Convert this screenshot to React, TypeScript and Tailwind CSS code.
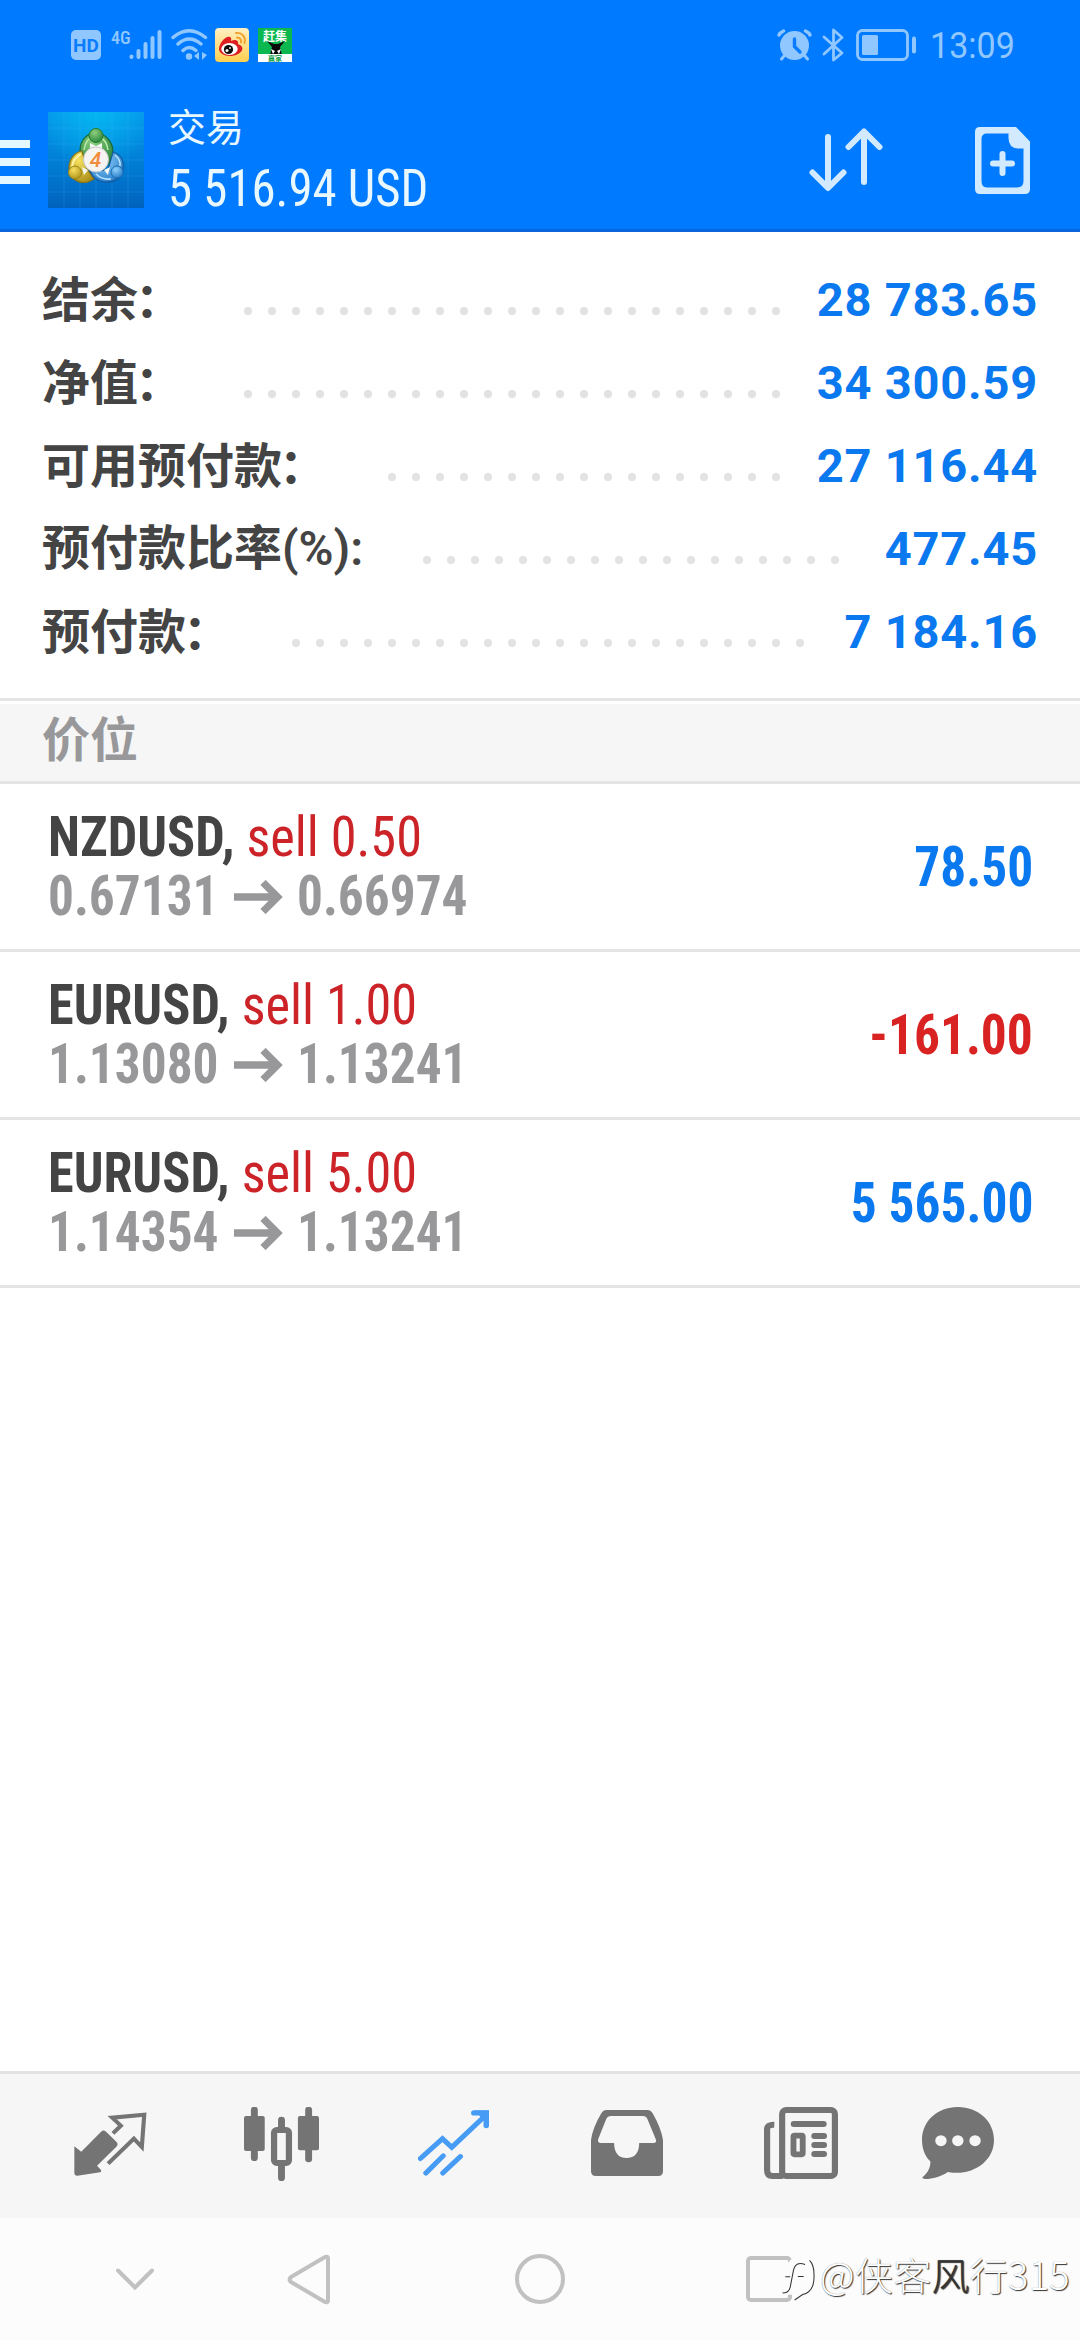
import React from 'react';

const cond = "font-['Roboto_Condensed','Roboto',sans-serif] [font-stretch:75%]";

const summary = [
  { label: '结余', latin: '', value: '28 783.65', start: 244, dots: 23 },
  { label: '净值', latin: '', value: '34 300.59', start: 244, dots: 23 },
  { label: '可用预付款', latin: '', value: '27 116.44', start: 388, dots: 17 },
  { label: '预付款比率', latin: '(%):', value: '477.45', start: 423, dots: 18 },
  { label: '预付款', latin: '', value: '7 184.16', start: 292, dots: 22 },
];

const positions = [
  { symbol: 'NZDUSD,', side: 'sell 0.50', open: '0.67131', price: '0.66974', profit: '78.50' },
  { symbol: 'EURUSD,', side: 'sell 1.00', open: '1.13080', price: '1.13241', profit: '-161.00' },
  { symbol: 'EURUSD,', side: 'sell 5.00', open: '1.14354', price: '1.13241', profit: '5 565.00' },
];

function StatusBar() {
  return (
    <div className="flex h-[90px] items-center pl-[71px] pr-[66px] text-[#91c7ff]">
      <div className="flex h-[30px] w-[30px] items-center justify-center rounded-[5px] bg-[#91c7ff] font-['Roboto'] text-[19px] font-bold leading-none text-[#0a7cff]">
        HD
      </div>
      <div className="ml-[10px] h-[32px] w-[18px] font-['Roboto_Condensed','Roboto'] text-[18px] font-medium leading-[18px] [font-stretch:75%]">
        4G
      </div>
      <svg className="h-[32px] w-[33px]" viewBox="0 0 33 32" stroke="currentColor" strokeWidth="4" strokeLinecap="round">
        <path d="M2.5 27.5v.5M9.5 22v6M16.500 15v13M23.500 9v19M30.500 3v25" />
      </svg>
      <svg className="ml-[9px] h-[32px] w-[37px]" viewBox="0 0 37 32" fill="none" stroke="currentColor" strokeWidth="3.4" strokeLinecap="round">
        <path d="M2 8.500Q18 -5 34.500 8.500M7 15Q18 5 30 15M12 21.500Q18 15.500 25 21.500" />
        <circle cx="18" cy="27.500" r="3.200" fill="currentColor" stroke="none" />
        <path d="M23 27l5-4v8M31 23v8l5-5z" fill="currentColor" stroke="none" />
      </svg>
      <svg className="ml-[7px] h-[34px] w-[34px]" viewBox="0 0 34 34">
        <defs>
          <linearGradient id="wb" x1="0" y1="0" x2="0" y2="1">
            <stop offset="0" stopColor="#fff0c4" />
            <stop offset="1" stopColor="#ffcf4e" />
          </linearGradient>
        </defs>
        <rect width="34" height="34" rx="4" fill="url(#wb)" />
        <path d="M4 21C4 15 11 7 15 9c2 1 1 3 1 4 4-2 8-1 7 3 9 3 3 12-8 12C9 28 4 25 4 21z" fill="#dd1f22" />
        <ellipse cx="14.500" cy="21" rx="8.200" ry="6" fill="#fff" />
        <circle cx="13.500" cy="21.500" r="4.600" fill="#0c0c0c" />
        <circle cx="12" cy="22.500" r="1.500" fill="#fff" />
        <circle cx="15" cy="20" r=".9" fill="#fff" />
        <path d="M21 5c6-1 10 4 8.500 10M22 9.500c3 0 4.500 2 4 5" fill="none" stroke="#f3a02a" strokeWidth="1.900" strokeLinecap="round" />
      </svg>
      <div className="relative ml-[9px] flex h-[34px] w-[34px] flex-col items-center justify-between overflow-hidden bg-[#0bb84f]">
        <span className="mt-[1px] font-['Noto_Sans_CJK_SC'] text-[12px] font-bold leading-[14px] text-white">赶集</span>
        <svg className="absolute left-[9px] top-[13px] h-[14px] w-[18px]" viewBox="0 0 18 14">
          <path d="M0 0l7 3h4l7-3-5 6 2 8H3l2-8z" fill="#0a0a0a" />
          <path d="M4 8l4 2-2 3zM14 8l-4 2 2 3z" fill="#fff" />
        </svg>
        <span className="relative h-[8px] w-full bg-white text-center font-['Noto_Sans_CJK_SC'] text-[7px] font-bold leading-[8px] text-[#0b9c45]">赢家</span>
      </div>
      <div className="flex-1" />
      <svg className="h-[32px] w-[35px]" viewBox="0 0 35 32" fill="none" stroke="currentColor" strokeLinecap="round">
        <circle cx="17.500" cy="16.500" r="14.500" fill="currentColor" stroke="none" />
        <path d="M2 6q1-2.500 4.500-4M33 6q-1-2.500-4.500-4" strokeWidth="3.400" />
        <path d="M7 27l-2.500 3M28 27l2.500 3" strokeWidth="3" />
        <path d="M17.500 10v7.500l5.500 5.500" stroke="#0a7cff" strokeWidth="3.400" />
      </svg>
      <svg className="ml-[10px] h-[34px] w-[22px]" viewBox="0 0 22 34" fill="none" stroke="currentColor" strokeWidth="2.800" strokeLinejoin="round" strokeLinecap="round">
        <path d="M2 9l18 16-8.500 7V2L20 9.500 2 26" />
      </svg>
      <svg className="ml-[12px] h-[32px] w-[60px]" viewBox="0 0 60 32" fill="none">
        <rect x="1.500" y="1.500" width="50" height="29" rx="5" stroke="currentColor" strokeWidth="2.800" />
        <rect x="6" y="6" width="16" height="20" rx="1.500" fill="currentColor" />
        <rect x="56" y="7.500" width="4" height="17" rx="2" fill="currentColor" />
      </svg>
      <span className="ml-[14px] mt-[1px] w-[84px] origin-left scale-x-[.92] whitespace-nowrap font-['Roboto'] text-[37px] leading-none [font-stretch:88%]">13:09</span>
    </div>
  );
}

function AppLogo() {
  return (
    <svg className="ml-[18px] h-[96px] w-[96px]" viewBox="0 0 96 96">
      <defs>
        <linearGradient id="bgv" x1="0" y1="0" x2="0" y2="1">
          <stop offset="0" stopColor="#0797ea" />
          <stop offset=".5" stopColor="#0080d6" />
          <stop offset="1" stopColor="#0062bd" />
        </linearGradient>
        <radialGradient id="glow" cx=".5" cy="0" r=".6">
          <stop offset="0" stopColor="#03b6f2" />
          <stop offset="1" stopColor="#03b6f2" stopOpacity="0" />
        </radialGradient>
        <radialGradient id="gr" cx=".4" cy=".3" r=".8">
          <stop offset="0" stopColor="#8fce7e" />
          <stop offset="1" stopColor="#1f7f35" />
        </radialGradient>
        <radialGradient id="ye" cx=".4" cy=".3" r=".8">
          <stop offset="0" stopColor="#f6e160" />
          <stop offset="1" stopColor="#a88a14" />
        </radialGradient>
        <radialGradient id="bl" cx=".4" cy=".3" r=".8">
          <stop offset="0" stopColor="#8fd0fb" />
          <stop offset="1" stopColor="#1c74c4" />
        </radialGradient>
      </defs>
      <rect width="96" height="96" fill="url(#bgv)" />
      <rect width="96" height="96" fill="url(#glow)" />
      <path d="M16 0v96M32 0v96M48 0v96M64 0v96M80 0v96M0 16h96M0 32h96M0 48h96M0 64h96M0 80h96" stroke="#5ec0f5" strokeOpacity=".22" strokeWidth=".8" />
      <path d="M32 39C32 28 39 21 48 21s17 9 17 19c0 8-3 11-6 13L48 36 37 46z" fill="url(#gr)" stroke="#176a35" strokeWidth="1.200" />
      <path d="M36 38q2-12 9-13M60 38q-1-9-8-13" fill="none" stroke="#b9ecac" strokeWidth="1.500" />
      <path d="M34 39c-8 1-13 9-13 17 0 11 10 16 19 14l6-3-7-10z" fill="url(#ye)" stroke="#8a7416" strokeWidth="1.200" />
      <path d="M33 42q-8 4-9 13" fill="none" stroke="#fff3a2" strokeWidth="2" />
      <path d="M65 40c9 3 11 10 10 17-1 10-10 14-19 13-8-1-12-6-14-11l18-1z" fill="url(#bl)" stroke="#15599d" strokeWidth="1.200" />
      <path d="M48 62q6 6 15 5M67 43q6 5 5 11" fill="none" stroke="#b8e4ff" strokeWidth="1.600" />
      <path d="M42 31l6 3 6-3v5H42zM34 55l6 3-4 5zM62 55l-6 3 4 5z" fill="#f2f7f2" />
      <circle cx="48" cy="23.500" r="7" fill="url(#gr)" stroke="#267c31" />
      <circle cx="27" cy="60.500" r="6.500" fill="url(#ye)" stroke="#9c8518" />
      <circle cx="69" cy="60" r="6" fill="url(#bl)" stroke="#206db1" />
      <circle cx="48" cy="47.500" r="12.500" fill="#f6f4f2" stroke="#c9c9c9" />
      <text x="47.500" y="55" textAnchor="middle" fontFamily="Roboto" fontSize="21" fontWeight="500" fontStyle="italic" fill="#f08c3c">4</text>
    </svg>
  );
}

function Header() {
  return (
    <header className="h-[232px] border-b-[3px] border-[#0865dc] bg-[#007aff]">
      <StatusBar />
      <div className="flex pt-[22px]">
        <div className="mt-[28px] flex h-[44px] w-[30px] flex-col justify-between">
          <div className="h-[8px] bg-[#e6f8ff]" />
          <div className="h-[8px] bg-[#e6f8ff]" />
          <div className="h-[8px] bg-[#e6f8ff]" />
        </div>
        <AppLogo />
        <div className="-mt-[9px] ml-[24px] flex w-[300px] flex-col text-[#e9f8ff]">
          <span className="font-['Noto_Sans_CJK_SC'] text-[38px] leading-[44px]">交易</span>
          <span className={`mt-[12px] origin-left scale-x-[.957] whitespace-nowrap text-[51px] leading-[60px] ${cond}`}>5 516.94 USD</span>
        </div>
        <svg className="ml-[341px] mt-[16px] h-[64px] w-[75px]" viewBox="0 0 75 64" fill="none" stroke="#d2eaff" strokeWidth="6" strokeLinecap="round" strokeLinejoin="round">
          <path d="M19 9v50M3.500 44.500L19 60l15.500-15.500M55 54V4M39.500 19L55 3.500 70.500 19" />
        </svg>
        <svg className="ml-[91px] mt-[15px] h-[67px] w-[55px]" viewBox="0 0 55 67">
          <path fillRule="evenodd" d="M5 0H41L55 14.500V62Q55 67 50 67H5Q0 67 0 62V5Q0 0 5 0ZM12 6.500Q6.500 6.500 6.500 12V54Q6.500 60.500 12 60.500H42Q48.500 60.500 48.500 54V21.500H44Q33.500 21.500 33.500 11V6.500Z" fill="#d2eaff" />
          <path d="M18 36.500h19M27.500 27v19" stroke="#d2eaff" strokeWidth="6" strokeLinecap="round" />
        </svg>
      </div>
    </header>
  );
}

function Summary() {
  return (
    <section className="flex h-[466px] flex-col bg-white pt-[26px]">
      {summary.map((row) => (
        <div key={row.label} className="relative flex h-[83px] items-center justify-between pl-[42px] pr-[42px]">
          {row.latin ? (
            <span className="mb-[4px] whitespace-nowrap font-['Noto_Sans_CJK_SC'] text-[48px] font-bold leading-none text-[#444]">
              {row.label}
              <span className="font-['Roboto'] text-[47.500px] font-semibold">{row.latin}</span>
            </span>
          ) : (
            <span className="mb-[7px] whitespace-nowrap font-['Noto_Sans_CJK_SC'] text-[48px] font-bold leading-none text-[#444]">
              {row.label.slice(0, -1)}
              <span className="tracking-[-3px]">{row.label.slice(-1)}</span>：
            </span>
          )}
          <div className="absolute top-[49px] flex gap-4" style={{ left: row.start }}>
            {Array.from({ length: row.dots }, (_, i) => (
              <i key={i} className="h-2 w-2 rounded-full bg-[#e2e2e2]" />
            ))}
          </div>
          <span className="whitespace-nowrap font-['Roboto'] text-[47px] font-bold leading-none tracking-[0.8px] text-[#0a78ee]">{row.value}</span>
        </div>
      ))}
    </section>
  );
}

function Position({ p }: { p: (typeof positions)[number] }) {
  return (
    <div className="flex h-[168px] items-center justify-between border-b-[3px] border-[#e4e4e4] bg-white pl-[48px] pr-[47px]">
      <div className={`whitespace-nowrap text-[55px] leading-[59px] ${cond}`}>
        <div className="origin-left scale-x-[.95] font-bold text-[#444]">
          {p.symbol} <span className="font-normal text-[#cc2328]">{p.side}</span>
        </div>
        <div className="flex items-center font-bold text-[#98989b]">
          <span className="w-[186px] origin-left scale-x-[.933]">{p.open}</span>
          <svg className="mt-[2px] h-[34px] w-[49px]" viewBox="0 0 49 34" fill="none" stroke="currentColor" strokeWidth="7.400">
            <path d="M0 17h43M29 2.500L43.500 17 29 31.500" />
          </svg>
          <span className="ml-[14px] origin-left scale-x-[.933]">{p.price}</span>
        </div>
      </div>
      <span className={`mt-[2px] origin-right scale-x-[.935] whitespace-nowrap text-[55px] font-bold ${cond} ${p.profit.startsWith('-') ? 'text-[#d92323]' : 'text-[#0a78ee]'}`}>{p.profit}</span>
    </div>
  );
}

function TabBar() {
  return (
    <nav className="flex h-[147px] border-t-[3px] border-[#e3e3e3] bg-[#f6f6f6] text-[#747474]">
      <svg className="ml-[74px] mt-[38px] h-[64px] w-[73px]" viewBox="214 157 212 192" preserveAspectRatio="none">
        <path d="M215 260L235 276L292 217Q299 209 307 216L337 246Q344 254 337 261L281 318L293 332Q294 336 290 338L224 348Q215 349 215 341Z" fill="currentColor" />
        <path d="M327 221L350 198L325 174L418 165L411 262L388 237L313 312" fill="none" stroke="currentColor" strokeWidth="12" />
      </svg>
      <svg className="ml-[97px] mt-[33px] h-[74px] w-[75px]" viewBox="709 141 217 222" preserveAspectRatio="none">
        <path d="M739 150v143M896 150v147M817.500 180v25M817.500 315v38" stroke="currentColor" strokeWidth="20" strokeLinecap="round" />
        <rect x="709" y="168" width="60" height="105" rx="6" fill="currentColor" />
        <rect x="865" y="168" width="61" height="103" rx="6" fill="currentColor" />
        <rect x="796" y="210" width="43" height="99" rx="8" fill="none" stroke="currentColor" strokeWidth="18" />
      </svg>
      <svg className="ml-[99px] mt-[36px] h-[66px] w-[71px]" viewBox="1214 149 206 200" preserveAspectRatio="none" fill="none" stroke="#469bf5" strokeWidth="15" strokeLinecap="round">
        <path d="M1221 296L1285 236L1312 262L1405 170" />
        <path d="M1376 158H1412V196" strokeWidth="16" />
        <path d="M1395 158h17v20z" fill="#469bf5" />
        <path d="M1237 340L1287 288M1286 340L1337 290" />
      </svg>
      <svg className="ml-[102px] mt-[36px] h-[66px] w-[72px]" viewBox="147 150 209 198" preserveAspectRatio="none">
        <path fillRule="evenodd" fill="currentColor" d="M192 150H312Q320 150 326 160Q350 203 356 240V334Q356 348 342 348H161Q147 348 147 334V240Q152 203 177 160Q183 150 192 150ZM205 168Q195 168 191 178L168 237Q165 249 176 249H214Q215 294 250 294Q286 294 287 249H328Q339 249 335 238L311 178Q307 168 298 168Z" />
      </svg>
      <svg className="ml-[101px] mt-[33px] h-[72px] w-[74px]" viewBox="647 141 216 216" preserveAspectRatio="none">
        <rect x="700" y="150" width="154" height="198" rx="12" fill="none" stroke="currentColor" strokeWidth="18" />
        <path d="M677 194Q656 193 656 208V330Q656 348 672 348H702" fill="none" stroke="currentColor" strokeWidth="18" />
        <path d="M734 192h87M794 228h28M794 255h28M794 282h28" stroke="currentColor" strokeWidth="18" strokeLinecap="round" />
        <rect x="733" y="227" width="27" height="56" rx="3" fill="none" stroke="currentColor" strokeWidth="17" />
      </svg>
      <svg className="ml-[84px] mt-[33px] h-[72px] w-[72px]" viewBox="1109 141 209 216" preserveAspectRatio="none">
        <path d="M1213 141C1273 141 1318 184 1318 240C1318 306 1253 350 1184 336C1164 350 1140 357 1118 357Q1106 356 1112 350C1124 341 1135 322 1133 304C1117 288 1109 265 1109 240C1109 184 1153 141 1213 141Z" fill="currentColor" />
        <circle cx="1164" cy="242" r="16.500" fill="#f6f6f6" />
        <circle cx="1213" cy="242" r="16.500" fill="#f6f6f6" />
        <circle cx="1263" cy="242" r="16.500" fill="#f6f6f6" />
      </svg>
    </nav>
  );
}

function SystemNav() {
  return (
    <div className="relative flex h-[122px] bg-[#fcfcfc] text-[#c1c1c1]">
      <svg className="ml-[116px] mt-[50px] h-[22px] w-[38px]" viewBox="0 0 38 22" fill="none" stroke="currentColor" strokeWidth="4" strokeLinecap="round">
        <path d="M2 2.500L19 19.500 36 2.500" />
      </svg>
      <svg className="ml-[133px] mt-[36px] h-[51px] w-[44px]" viewBox="0 0 44 51" fill="none" stroke="currentColor" strokeWidth="4" strokeLinejoin="round">
        <path d="M3 25.500Q2 24.500 4 23L38 3Q40.500 2 41 4V47Q40.500 49 38 48L4 28Q2 26.500 3 25.500Z" />
      </svg>
      <div className="ml-[184px] mt-[36px] h-[50px] w-[50px] rounded-full border-[4px] border-current" />
      <div className="ml-[181px] mt-[38px] h-[46px] w-[46px] rounded-[5px] border-[4px] border-current" />
      <div className="absolute left-[777px] top-[37px] flex items-start">
        <svg className="h-[46px] w-[45px]" viewBox="690 595 130 135" preserveAspectRatio="none">
          <path d="M735 604H770Q797 615 797 655Q797 700 760 708L742 727L733 712H700Q690 690 700 640Z" fill="#fcfcfc" />
          <path d="M771 623Q745 612 738 638L728 690Q723 708 706 706M714 659h14M750 658h17" fill="none" stroke="#333" strokeWidth="3" />
          <path d="M784 611Q798 625 797 657Q797 705 764 711L741 727" fill="none" stroke="#333" strokeWidth="3" />
        </svg>
        <span className="-ml-[2px] -mt-[4px] whitespace-nowrap font-['Noto_Sans_CJK_SC'] text-[38px] font-light leading-[46px] tracking-[0.3px] text-white [text-shadow:1px_1px_1px_#333,0_0_1px_#888]">
          @侠客<span className="text-[#333]">风</span>行315
        </span>
      </div>
    </div>
  );
}

export default function App() {
  return (
    <main className="flex h-[2340px] w-[1080px] flex-col overflow-hidden bg-white">
      <Header />
      <Summary />
      <div className="h-[86px] border-y-[3px] border-[#e4e4e4] bg-white pt-[3px]">
        <div className="h-[77px] bg-[#f6f6f6] pl-[42px] font-['Noto_Sans_CJK_SC'] text-[48px] font-bold leading-[64px] text-[#98989b]">价位</div>
      </div>
      {positions.map((p) => (
        <Position key={p.open} p={p} />
      ))}
      <div className="flex-1" />
      <TabBar />
      <SystemNav />
    </main>
  );
}
